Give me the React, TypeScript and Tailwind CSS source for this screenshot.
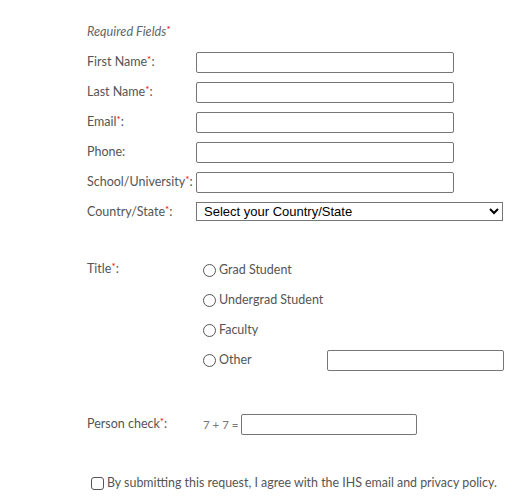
import React from "react";

const font = { fontFamily: 'Lato, "Open Sans", sans-serif' };

function Star() {
  return <span className="text-[#e00] text-[10px] relative -top-[3px]">*</span>;
}

function Field({ label, req }: { label: string; req?: boolean }) {
  return (
    <div className="flex items-center h-[30px]">
      <label className="w-[109px] text-[12.5px] text-[#555] whitespace-nowrap">
        {label}
        {req && <Star />}:
      </label>
      <input
        type="text"
        className="w-[258px] h-[21px] border border-[#767676] rounded-[2px] bg-white"
      />
    </div>
  );
}

export default function App() {
  const titles = ["Grad Student", "Undergrad Student", "Faculty", "Other"];
  return (
    <div className="w-[512px] h-[504px] bg-white pl-[87px] pt-[23px]" style={font}>
      <p className="italic text-[12.7px] text-[#666] h-[24px] leading-[16px]">
        Required Fields<Star />
      </p>
      <Field label="First Name" req />
      <Field label="Last Name" req />
      <Field label="Email" req />
      <Field label="Phone" />
      <Field label="School/University" req />
      <div className="flex items-center h-[30px]">
        <label className="w-[109px] text-[12.5px] text-[#555] whitespace-nowrap">
          Country/State<Star />:
        </label>
        <select
          className="w-[307px] h-[19px] border border-[#767676] text-[13px] text-black bg-white pl-[3px] -mt-[1px]"
          style={{ fontFamily: '"Liberation Sans", Arial, sans-serif' }}
        >
          <option>Select your Country/State</option>
        </select>
      </div>

      <div className="flex mt-[28px]">
        <label className="w-[116px] text-[12.5px] text-[#555] leading-[16px] pt-[6px]">
          Title<Star />:
        </label>
        <div className="flex flex-col">
          {titles.map((t) => (
            <div key={t} className="flex items-center h-[30px]">
              <span className="w-[13px] h-[13px] rounded-full border border-[#555] mr-[3px] shrink-0" />
              <span className="text-[12.5px] text-[#555] w-[108px] whitespace-nowrap">{t}</span>
              {t === "Other" && (
                <input
                  type="text"
                  className="w-[177px] h-[21px] border border-[#767676] rounded-[2px] bg-white"
                />
              )}
            </div>
          ))}
        </div>
      </div>

      <div className="flex items-center mt-[39px] h-[21px]">
        <label className="w-[116px] text-[12.5px] text-[#555] whitespace-nowrap">
          Person check<Star />:
        </label>
        <span className="text-[11.5px] text-[#777] mr-[2px] whitespace-nowrap">7 + 7 =</span>
        <input
          type="text"
          className="w-[176px] h-[21px] border border-[#767676] rounded-[2px] bg-white"
        />
      </div>

      <div className="flex items-center mt-[40px] ml-[4px] h-[16px]">
        <span className="w-[13px] h-[13px] rounded-[3px] border border-[#555] mr-[3px] shrink-0" />
        <span className="text-[12.4px] text-[#555] whitespace-nowrap">
          By submitting this request, I agree with the IHS email and privacy policy.
        </span>
      </div>
    </div>
  );
}
